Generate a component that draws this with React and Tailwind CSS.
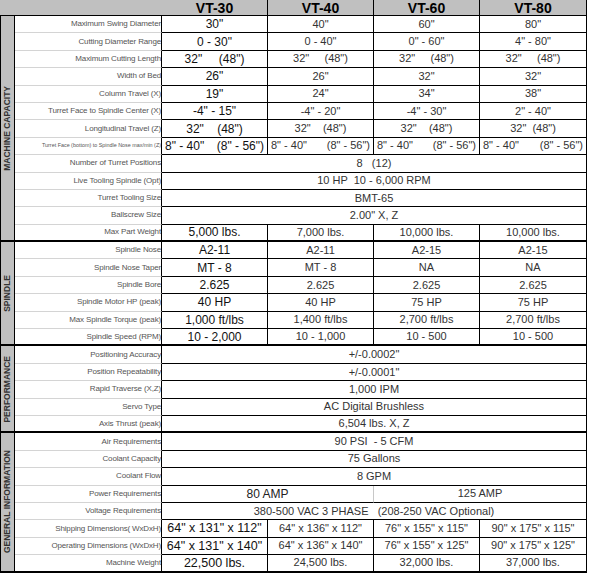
const sections = [
  {
    name: 'MACHINE CAPACITY',
    rows: [
      { label: 'Maximum Swing Diameter', cells: ['30"', '40"', '60"', '80"'] },
      { label: 'Cutting Diameter Range', cells: ['0 - 30"', '0 - 40"', '0" - 60"', '4" - 80"'] },
      { label: 'Maximum Cutting Length', cells: ['32"     (48")', '32"     (48")', '32"     (48")', '32"     (48")'] },
      { label: 'Width of Bed', cells: ['26"', '26"', '32"', '32"'] },
      { label: 'Column Travel (X)', cells: ['19"', '24"', '34"', '38"'] },
      { label: 'Turret Face to Spindle Center (X)', cells: ['-4" - 15"', '-4" - 20"', '-4" - 30"', '2" - 40"'] },
      { label: 'Longitudinal Travel (Z)', cells: ['32"    (48")', '32"    (48")', '32"    (48")', '32"  (48")'] },
      {
        label: 'Turret Face (bottom) to Spindle Nose max/min (Z)',
        tiny: true,
        cells: [
          { split: ['8" - 40"', '(8" - 56")'] },
          { split: ['8" - 40"', '(8" - 56")'] },
          { split: ['8" - 40"', '(8" - 56")'] },
          { split: ['8" - 40"', '(8" - 56")'] },
        ],
      },
      { label: 'Number of Turret Positions', cells: [{ t: '8   (12)', span: 4 }] },
      { label: 'Live Tooling Spindle (Opt)', cells: [{ t: '10 HP  10 - 6,000 RPM', span: 4 }] },
      { label: 'Turret Tooling Size', cells: [{ t: 'BMT-65', span: 4 }] },
      { label: 'Ballscrew Size', cells: [{ t: '2.00" X, Z', span: 4 }] },
      { label: 'Max Part Weight', cells: ['5,000 lbs.', '7,000 lbs.', '10,000 lbs.', '10,000 lbs.'] },
    ],
  },
  {
    name: 'SPINDLE',
    rows: [
      { label: 'Spindle Nose', cells: ['A2-11', 'A2-11', 'A2-15', 'A2-15'] },
      { label: 'Spindle Nose Taper', cells: ['MT - 8', 'MT - 8', 'NA', 'NA'] },
      { label: 'Spindle Bore', cells: ['2.625', '2.625', '2.625', '2.625'] },
      { label: 'Spindle Motor HP (peak)', cells: ['40 HP', '40 HP', '75 HP', '75 HP'] },
      { label: 'Max Spindle Torque (peak)', cells: ['1,000 ft/lbs', '1,400 ft/lbs', '2,700 ft/lbs', '2,700 ft/lbs'] },
      { label: 'Spindle Speed (RPM)', cells: ['10 - 2,000', '10 - 1,000', '10 - 500', '10 - 500'] },
    ],
  },
  {
    name: 'PERFORMANCE',
    rows: [
      { label: 'Positioning Accuracy', cells: [{ t: '+/-0.0002"', span: 4 }] },
      { label: 'Position Repeatability', cells: [{ t: '+/-0.0001"', span: 4 }] },
      { label: 'Rapid Traverse (X,Z)', cells: [{ t: '1,000 IPM', span: 4 }] },
      { label: 'Servo Type', cells: [{ t: 'AC Digital Brushless', span: 4 }] },
      { label: 'Axis Thrust (peak)', cells: [{ t: '6,504 lbs. X, Z', span: 4 }] },
    ],
  },
  {
    name: 'GENERAL INFORMATION',
    rows: [
      { label: 'Air Requirements', cells: [{ t: '90 PSI  - 5 CFM', span: 4 }] },
      { label: 'Coolant Capacity', cells: [{ t: '75 Gallons', span: 4 }] },
      { label: 'Coolant Flow', cells: [{ t: '8 GPM', span: 4 }] },
      { label: 'Power Requirements', cells: [{ t: '80 AMP', span: 2, soft: true, big: true }, { t: '125 AMP', span: 2 }] },
      { label: 'Voltage Requirements', cells: [{ t: '380-500 VAC 3 PHASE   (208-250 VAC Optional)', span: 4 }] },
      { label: 'Shipping Dimensions( WxDxH)', cells: ['64" x 131" x 112"', '64" x 136" x 112"', '76" x 155" x 115"', '90" x 175" x 115"'] },
      { label: 'Operating Dimensions (WxDxH)', cells: ['64" x 131" x 140"', '64" x 136" x 140"', '76" x 155" x 125"', '90" x 175" x 125"'] },
      { label: 'Machine Weight', cells: ['22,500 lbs.', '24,500 lbs.', '32,000 lbs.', '37,000 lbs.'] },
    ],
  },
]

const models = ['VT-30', 'VT-40', 'VT-60', 'VT-80']

function DataCell({ cell, index, last, general }) {
  const c = typeof cell === 'string' ? { t: cell } : cell
  const span = c.span || 1
  const first = index === 0 && span === 1
  const size = first ? (general ? 'text-[12.5px] text-[#111]' : 'text-[12px] text-[#111]') : c.big ? 'text-[12px] text-[#222]' : 'text-[11px] text-[#333]'
  const spanClass = span === 4 ? 'col-span-4' : span === 2 ? 'col-span-2' : ''
  return (
    <div
      className={[
        'flex items-center whitespace-pre bg-white border-b border-r leading-none overflow-hidden',
        c.soft ? 'border-r-[#c8c8c8]' : 'border-r-black',
        last ? 'border-b-2 border-b-black' : 'border-b-black',
        c.split ? 'justify-between px-[3px]' : 'justify-center',
        spanClass,
        size,
      ].join(' ')}
    >
      {c.split ? (
        <>
          <span>{c.split[0]}</span>
          <span>{c.split[1]}</span>
        </>
      ) : (
        c.t
      )}
    </div>
  )
}

export default function App() {
  return (
    <div className="w-[589px] h-[576px] bg-white [font-family:'Liberation_Sans',Arial,sans-serif]">
      <div className="grid grid-cols-[15px_147px_106px_106px_106px_107px] grid-rows-[16px_repeat(32,17.4px)]">
        <div className="col-span-2 bg-[#c0c0c0] border-b border-black" />
        {models.map((m) => (
          <div
            key={m}
            className="flex items-center justify-center bg-[#c0c0c0] border-b border-r border-black text-[14px] font-bold text-black leading-none"
          >
            {m}
          </div>
        ))}

        {sections.map((s, si) =>
          s.rows.map((r, ri) => {
            const last = ri === s.rows.length - 1
            return [
              ri === 0 ? (
                <div
                  key={s.name}
                  style={{ gridRow: `span ${s.rows.length} / span ${s.rows.length}` }}
                  className="flex items-center justify-center bg-[#c0c0c0] border-l border-r border-b-2 border-black"
                >
                  <span className="[writing-mode:vertical-rl] rotate-180 text-[8.5px] font-bold text-[#333] whitespace-nowrap leading-none">
                    {s.name}
                  </span>
                </div>
              ) : null,
              <div
                key={s.name + r.label}
                className={[
                  'flex items-center justify-end whitespace-nowrap border-r border-r-black text-[#555] leading-none overflow-hidden',
                  last ? 'border-b-2 border-b-black' : 'border-b border-b-[#d4d4d4]',
                  r.tiny ? 'text-[5.4px]' : 'text-[8px] tracking-[-0.15px]',
                ].join(' ')}
              >
                {r.label}
              </div>,
              ...r.cells.map((c, ci) => (
                <DataCell key={s.name + r.label + ci} cell={c} index={ci} last={last} general={si === 3} />
              )),
            ]
          })
        )}
      </div>
    </div>
  )
}
